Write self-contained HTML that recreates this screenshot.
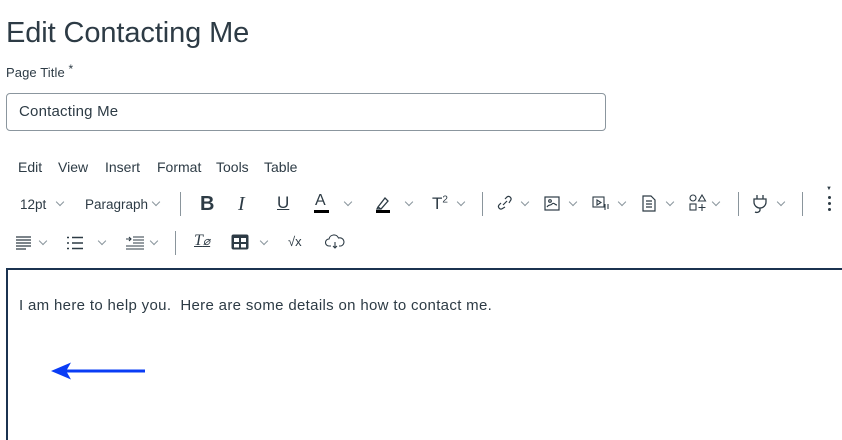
<!DOCTYPE html><html><head><style>
body{margin:0;width:842px;height:428px;overflow:hidden;background:#fff;font-family:"Liberation Sans",sans-serif;color:#2d3b45;position:relative}
.a{position:absolute;white-space:nowrap}
.chev{position:absolute;width:5px;height:5px;border-right:1px solid #8a959c;border-bottom:1px solid #8a959c;transform:rotate(45deg)}
.sep{position:absolute;width:1px;height:24px;background:#8a959c}
svg{position:absolute}
</style></head><body>
<div class="a" style="left:6px;top:17px;font-size:29px;letter-spacing:-0.1px">Edit Contacting Me</div>
<div class="a" style="left:6px;top:65px;font-size:13px;letter-spacing:0.1px">Page Title <span style="position:relative;top:-4px;font-size:12px">*</span></div>
<div class="a" style="left:6px;top:93px;width:598px;height:36px;border:1px solid #8b969e;border-radius:4px"></div>
<div class="a" style="left:19px;top:103px;font-size:15px;letter-spacing:0.2px">Contacting Me</div>
<div class="a" style="left:18px;top:159px;font-size:14px">Edit</div>
<div class="a" style="left:58px;top:159px;font-size:14px">View</div>
<div class="a" style="left:105px;top:159px;font-size:14px">Insert</div>
<div class="a" style="left:157px;top:159px;font-size:14px">Format</div>
<div class="a" style="left:216px;top:159px;font-size:14px">Tools</div>
<div class="a" style="left:264px;top:159px;font-size:14px">Table</div>

<div class="a" style="left:20px;top:197px;font-size:13.5px">12pt</div><div class="chev" style="left:57px;top:199px"></div>
<div class="a" style="left:85px;top:197px;font-size:13.5px">Paragraph</div><div class="chev" style="left:153px;top:199px"></div>
<div class="sep" style="left:180px;top:192px"></div>
<div class="a" style="left:200px;top:193px;font-size:20px;font-weight:bold">B</div>
<div class="a" style="left:238px;top:193px;font-size:20px;font-style:italic;font-family:'Liberation Serif',serif">I</div>
<div class="a" style="left:277px;top:193px;font-size:17px;text-decoration:underline">U</div>
<div class="a" style="left:315px;top:192px;font-size:16px">A</div><div class="a" style="left:314px;top:210px;width:15px;height:3px;background:#000"></div><div class="chev" style="left:345px;top:199px"></div>
<svg style="left:375px;top:194px" width="16" height="20" viewBox="0 0 16 20"><path d="M3 13 L10 4 L13 7 L6 15 Z M3 13 L2 15 L6 15" fill="none" stroke="#2d3b45" stroke-width="1.3"/><rect x="1" y="16" width="14" height="3" fill="#000"/></svg><div class="chev" style="left:406px;top:199px"></div>
<div class="a" style="left:432px;top:194px;font-size:17px">T<sup style="font-size:10px">2</sup></div><div class="chev" style="left:458px;top:199px"></div>
<div class="sep" style="left:482px;top:192px"></div>
<svg style="left:496px;top:194px" width="18" height="18" viewBox="0 0 18 18" fill="none" stroke="#2d3b45" stroke-width="1.2"><path d="M7 11l4-4M5 9l-2 2a2.5 2.5 0 003.5 3.5L9 13M9 5l2-2a2.5 2.5 0 013.5 3.5L13 9"/></svg><div class="chev" style="left:522px;top:199px"></div>
<svg style="left:544px;top:196px" width="16" height="15" viewBox="0 0 16 15" fill="none" stroke="#2d3b45" stroke-width="1.2"><rect x="1" y="1" width="14" height="13"/><path d="M3 11c2-3 3-1 5-3s3 1 5 1"/><circle cx="6" cy="5" r="1.3"/></svg><div class="chev" style="left:570px;top:199px"></div>
<svg style="left:592px;top:196px" width="18" height="16" viewBox="0 0 18 16" fill="none" stroke="#2d3b45" stroke-width="1.1"><rect x="1" y="1" width="11" height="10"/><path d="M5 4l4 2.5-4 2.5z M13 8v6M16 8v5"/></svg><div class="chev" style="left:619px;top:199px"></div>
<svg style="left:642px;top:195px" width="14" height="17" viewBox="0 0 14 17" fill="none" stroke="#2d3b45" stroke-width="1.2"><path d="M1 1h8l4 4v11H1z M4 6h6M4 9h6M4 12h6"/></svg><div class="chev" style="left:667px;top:199px"></div>
<svg style="left:689px;top:194px" width="18" height="18" viewBox="0 0 18 18" fill="none" stroke="#2d3b45" stroke-width="1.1"><circle cx="4" cy="4" r="3"/><path d="M13 1l3.5 6h-7z"/><rect x="1" y="10" width="6" height="6"/><path d="M13 10v7M9.5 13.5h7"/></svg><div class="chev" style="left:713px;top:199px"></div>
<div class="sep" style="left:738px;top:192px"></div>
<svg style="left:752px;top:194px" width="16" height="20" viewBox="0 0 16 20" fill="none" stroke="#2d3b45" stroke-width="1.3"><path d="M5 1v4M11 1v4M2 5h12v3a6 6 0 01-12 0z M8 14v2c0 2-3 3-5 2"/></svg><div class="chev" style="left:778px;top:199px"></div>
<div class="sep" style="left:802px;top:192px"></div>
<div class="a" style="left:826px;top:186px;font-size:6px">▼</div>
<div class="a" style="left:828px;top:196px;width:3px;height:3px;border-radius:50%;background:#2d3b45;box-shadow:0 6px 0 #2d3b45,0 12px 0 #2d3b45"></div>

<svg style="left:15px;top:236px" width="18" height="14" viewBox="0 0 18 14" stroke="#2d3b45" stroke-width="1.2"><path d="M1 1h15M1 4h15M1 7h15M1 10h15M1 13h10"/></svg><div class="chev" style="left:40px;top:238px"></div>
<svg style="left:66px;top:236px" width="18" height="14" viewBox="0 0 18 14" stroke="#2d3b45" stroke-width="1.4"><path d="M1 1.5h2M1 7h2M1 12.5h2M6 1.5h11M6 7h11M6 12.5h11"/></svg><div class="chev" style="left:99px;top:238px"></div>
<svg style="left:125px;top:236px" width="20" height="14" viewBox="0 0 20 14" stroke="#2d3b45" stroke-width="1.1" fill="none"><path d="M1 3h5M4 1l2 2-2 2M8 1h11M8 4h11M8 7h11M1 10h18M1 13h18"/></svg><div class="chev" style="left:151px;top:238px"></div>
<div class="sep" style="left:175px;top:231px"></div>
<div class="a" style="left:194px;top:232px;font-size:16px;font-style:italic;font-family:'Liberation Serif',serif;text-decoration:underline">T<span style="font-size:12px">⌀</span></div>
<svg style="left:231px;top:234px" width="18" height="16" viewBox="0 0 18 16"><rect x="0.5" y="0.5" width="17" height="15" rx="2" fill="#2d3b45"/><rect x="3" y="4" width="5" height="4" fill="#fff"/><rect x="10" y="4" width="5" height="4" fill="#fff"/><rect x="3" y="10" width="5" height="3.5" fill="#fff"/><rect x="10" y="10" width="5" height="3.5" fill="#fff"/></svg><div class="chev" style="left:261px;top:238px"></div>
<div class="a" style="left:288px;top:234px;font-size:13px">√x</div>
<svg style="left:325px;top:234px" width="20" height="16" viewBox="0 0 20 16" fill="none" stroke="#2d3b45" stroke-width="1.1"><path d="M6 12H4a3.5 3.5 0 010-7 5 5 0 019.5-1A3.5 3.5 0 0116 12h-2M10 8v6M8 12l2 2 2-2"/></svg>

<div class="a" style="left:6px;top:268px;width:840px;height:170px;border-left:2px solid #1b3350;border-top:2px solid #1b3350"></div>
<div class="a" style="left:19px;top:297px;font-size:15px;letter-spacing:0.33px">I am here to help you.&nbsp; Here are some details on how to contact me.</div>
<svg style="left:50px;top:361px" width="96" height="20" viewBox="0 0 96 20"><path d="M1 10L21 1.5L17 8.5H95V11.5H17L21 18.5Z" fill="#0a3cf5"/></svg>
</body></html>
